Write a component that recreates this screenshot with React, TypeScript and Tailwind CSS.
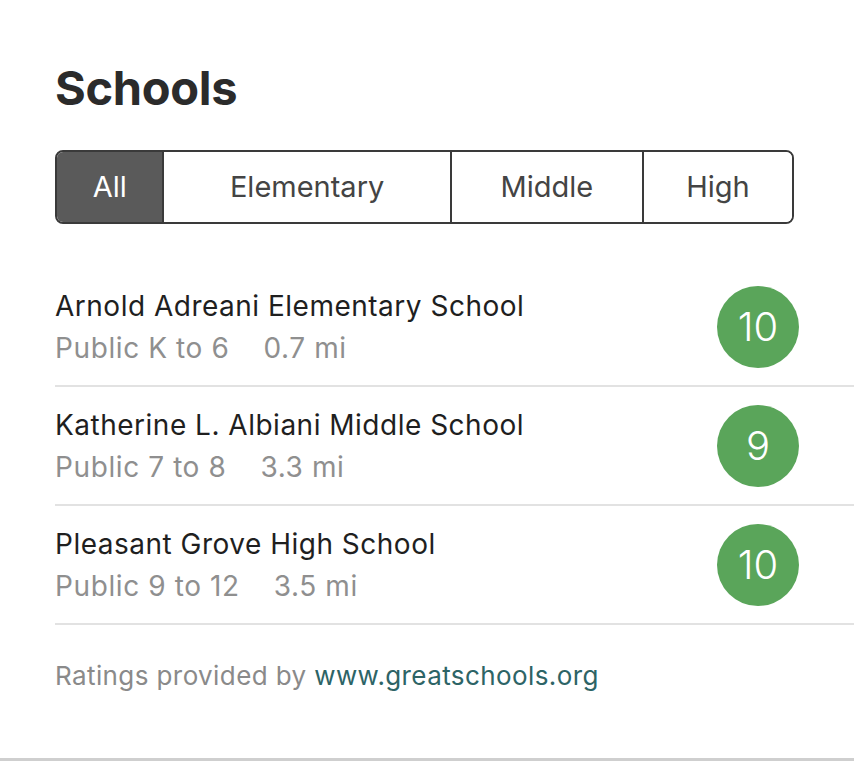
import React, { useState } from 'react';

type School = {
  name: string;
  kind: string;
  distance: string;
  rating: number;
};

const schools: School[] = [
  { name: 'Arnold Adreani Elementary School', kind: 'Public K to 6', distance: '0.7 mi', rating: 10 },
  { name: 'Katherine L. Albiani Middle School', kind: 'Public 7 to 8', distance: '3.3 mi', rating: 9 },
  { name: 'Pleasant Grove High School', kind: 'Public 9 to 12', distance: '3.5 mi', rating: 10 },
];

const tabs = [
  { label: 'All', width: 'w-[106px]' },
  { label: 'Elementary', width: 'w-[289px]' },
  { label: 'Middle', width: 'w-[193px]' },
  { label: 'High', width: 'w-[151px]' },
];

const App: React.FC = () => {
  const [active, setActive] = useState<string>('All');

  return (
    <div className="w-[854px] h-[768px] bg-white overflow-hidden font-['Inter',sans-serif]">
      <div className="h-[761px] pl-[55px] pt-[62px] border-b-[3px] border-[#cfcfcf]">
        <h1 className="text-[47px] leading-[52px] font-bold text-[#2b2b2b] tracking-[-0.3px]">Schools</h1>

        {/* Segmented filter */}
        <div className="mt-[36px] flex w-[739px] h-[74px] border-2 border-[#3a3a3a] rounded-[8px] overflow-hidden">
          {tabs.map((t, i) => (
            <button
              key={t.label}
              onClick={() => setActive(t.label)}
              className={`${t.width} h-full flex items-center justify-center text-[29px] ${i > 0 ? 'border-l-2 border-[#3a3a3a]' : ''} ${active === t.label ? 'bg-[#5a5a5a] text-white' : 'bg-white text-[#444]'}`}
            >
              {t.label}
            </button>
          ))}
        </div>

        {/* School list */}
        <div className="mt-[44px]">
          {schools.map((s) => (
            <div key={s.name} className="h-[119px] flex items-center border-b-2 border-[#e2e2e2]">
              <div className="flex-1">
                <div className="text-[28px] leading-[42px] tracking-[0.5px] text-[#1f1f1f]">{s.name}</div>
                <div className="text-[28px] leading-[42px] tracking-[0.6px] text-[#8f8f8f] flex gap-[34px]">
                  <span>{s.kind}</span>
                  <span>{s.distance}</span>
                </div>
              </div>
              <div className="mr-[55px] w-[82px] h-[82px] rounded-full bg-[#5aa55a] flex items-center justify-center text-white text-[40px] font-light">
                {s.rating}
              </div>
            </div>
          ))}
        </div>

        <p className="mt-[35px] text-[26px] leading-[32px] tracking-[0.4px] text-[#8a8a8a]">
          Ratings provided by <a href="#" className="text-[#2d6466]">www.greatschools.org</a>
        </p>
      </div>
    </div>
  );
};

export default App;
